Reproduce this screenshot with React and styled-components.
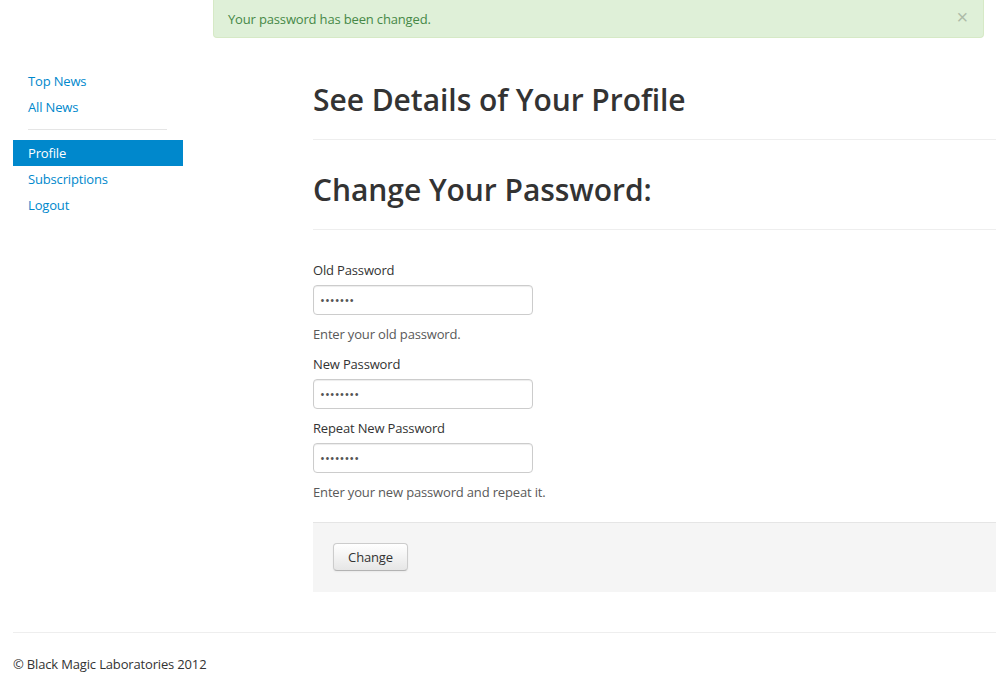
import React from "react";
import styled, { createGlobalStyle } from "styled-components";

const GlobalStyle = createGlobalStyle`
  html, body {
    margin: 0;
    padding: 0;
    background: #fff;
    overflow-x: hidden;
  }
  body {
    font-family: "Open Sans", "Liberation Sans", sans-serif;
    font-size: 13px;
    line-height: 18px;
    letter-spacing: -0.16px;
    color: #333;
  }
`;

const Page = styled.div`
  padding-left: 13px;
`;

const Alert = styled.div`
  position: relative;
  box-sizing: border-box;
  margin-left: 200px;
  width: 771px;
  height: 38px;
  padding: 10px 35px 9px 14px;
  background: #dff0d8;
  border: 1px solid #d6e9c6;
  border-top: none;
  border-radius: 0 0 4px 4px;
  color: #468847;
`;

const Close = styled.span`
  position: absolute;
  right: 15px;
  top: 7px;
  font-family: "Liberation Sans", sans-serif;
  font-size: 20px;
  font-weight: normal;
  line-height: 20px;
  color: #000;
  opacity: 0.22;
`;

const Row = styled.div`
  display: flex;
  margin-top: 30px;
`;

const Sidebar = styled.ul`
  list-style: none;
  margin: 0;
  padding: 0;
  width: 170px;
  flex-shrink: 0;
`;

const NavItem = styled.li`
  a {
    display: block;
    height: 26px;
    line-height: 26px;
    padding-left: 15px;
    text-decoration: none;
    color: ${(p) => (p.active ? "#fff" : "#0088cc")};
    background: ${(p) => (p.active ? "#0088cc" : "transparent")};
  }
`;

const Divider = styled.li`
  height: 1px;
  margin: 9px 16px 10px 15px;
  background: #e5e5e5;
`;

const Main = styled.div`
  flex: 1;
  margin-left: 130px;
`;

const PageHeader = styled.div`
  padding-bottom: 9px;
  border-bottom: 1px solid #eee;
  margin: ${(p) => (p.first ? "12px" : "30px")} 0 0;
`;

const Heading = styled.h1`
  margin: 0 0 10px;
  font-size: 30px;
  line-height: 40px;
  font-weight: 600;
  letter-spacing: -0.05px;
  color: #333;
`;

const Form = styled.form`
  display: flex;
  flex-direction: column;
  align-items: flex-start;
  padding-top: 31px;
`;

const Label = styled.label`
  display: block;
  margin-top: ${(p) => p.gap || 0}px;
  margin-bottom: 6px;
`;

const Input = styled.input`
  box-sizing: border-box;
  width: 220px;
  height: 30px;
  padding: 4px 6px;
  border: 1px solid #ccc;
  border-radius: 4px;
  box-shadow: inset 0 1px 1px rgba(0, 0, 0, 0.075);
  font-family: "Open Sans", "Liberation Sans", sans-serif;
  font-size: 13px;
  color: #555;
  outline: none;
`;

const Help = styled.p`
  margin: 10px 0 0;
  color: #595959;
`;

const Actions = styled.div`
  box-sizing: border-box;
  align-self: stretch;
  margin-top: 21px;
  padding: 20px;
  height: 70px;
  background: #f5f5f5;
  border-top: 1px solid #e5e5e5;
`;

const Button = styled.button`
  box-sizing: border-box;
  height: 28px;
  width: 75px;
  padding: 4px 14px;
  font-family: "Open Sans", "Liberation Sans", sans-serif;
  font-size: 13px;
  line-height: 18px;
  letter-spacing: -0.16px;
  color: #333;
  background: linear-gradient(#ffffff, #e6e6e6);
  border: 1px solid #cccccc;
  border-bottom-color: #b3b3b3;
  border-radius: 4px;
  box-shadow: inset 0 1px 0 rgba(255, 255, 255, 0.2), 0 1px 2px rgba(0, 0, 0, 0.05);
`;

const Footer = styled.footer`
  margin-top: 40px;
  border-top: 1px solid #eee;
  padding-top: 22px;
  padding-bottom: 20px;
`;

const nav = [
  { label: "Top News" },
  { label: "All News" },
  { divider: true },
  { label: "Profile", active: true },
  { label: "Subscriptions" },
  { label: "Logout" },
];

export default function App() {
  return (
    <>
      <GlobalStyle />
      <Page>
        <Alert>
          Your password has been changed.
          <Close>×</Close>
        </Alert>
        <Row>
          <Sidebar>
            {nav.map((item, i) =>
              item.divider ? (
                <Divider key={i} />
              ) : (
                <NavItem key={i} active={item.active}>
                  <a href="#">{item.label}</a>
                </NavItem>
              )
            )}
          </Sidebar>
          <Main>
            <PageHeader first>
              <Heading>See Details of Your Profile</Heading>
            </PageHeader>
            <PageHeader>
              <Heading>Change Your Password:</Heading>
            </PageHeader>
            <Form onSubmit={(e) => e.preventDefault()}>
              <Label>Old Password</Label>
              <Input type="password" defaultValue="1234567" readOnly />
              <Help>Enter your old password.</Help>
              <Label gap={12}>New Password</Label>
              <Input type="password" defaultValue="12345678" readOnly />
              <Label gap={10}>Repeat New Password</Label>
              <Input type="password" defaultValue="12345678" readOnly />
              <Help>Enter your new password and repeat it.</Help>
              <Actions>
                <Button type="button">Change</Button>
              </Actions>
            </Form>
          </Main>
        </Row>
        <Footer>© Black Magic Laboratories 2012</Footer>
      </Page>
    </>
  );
}
